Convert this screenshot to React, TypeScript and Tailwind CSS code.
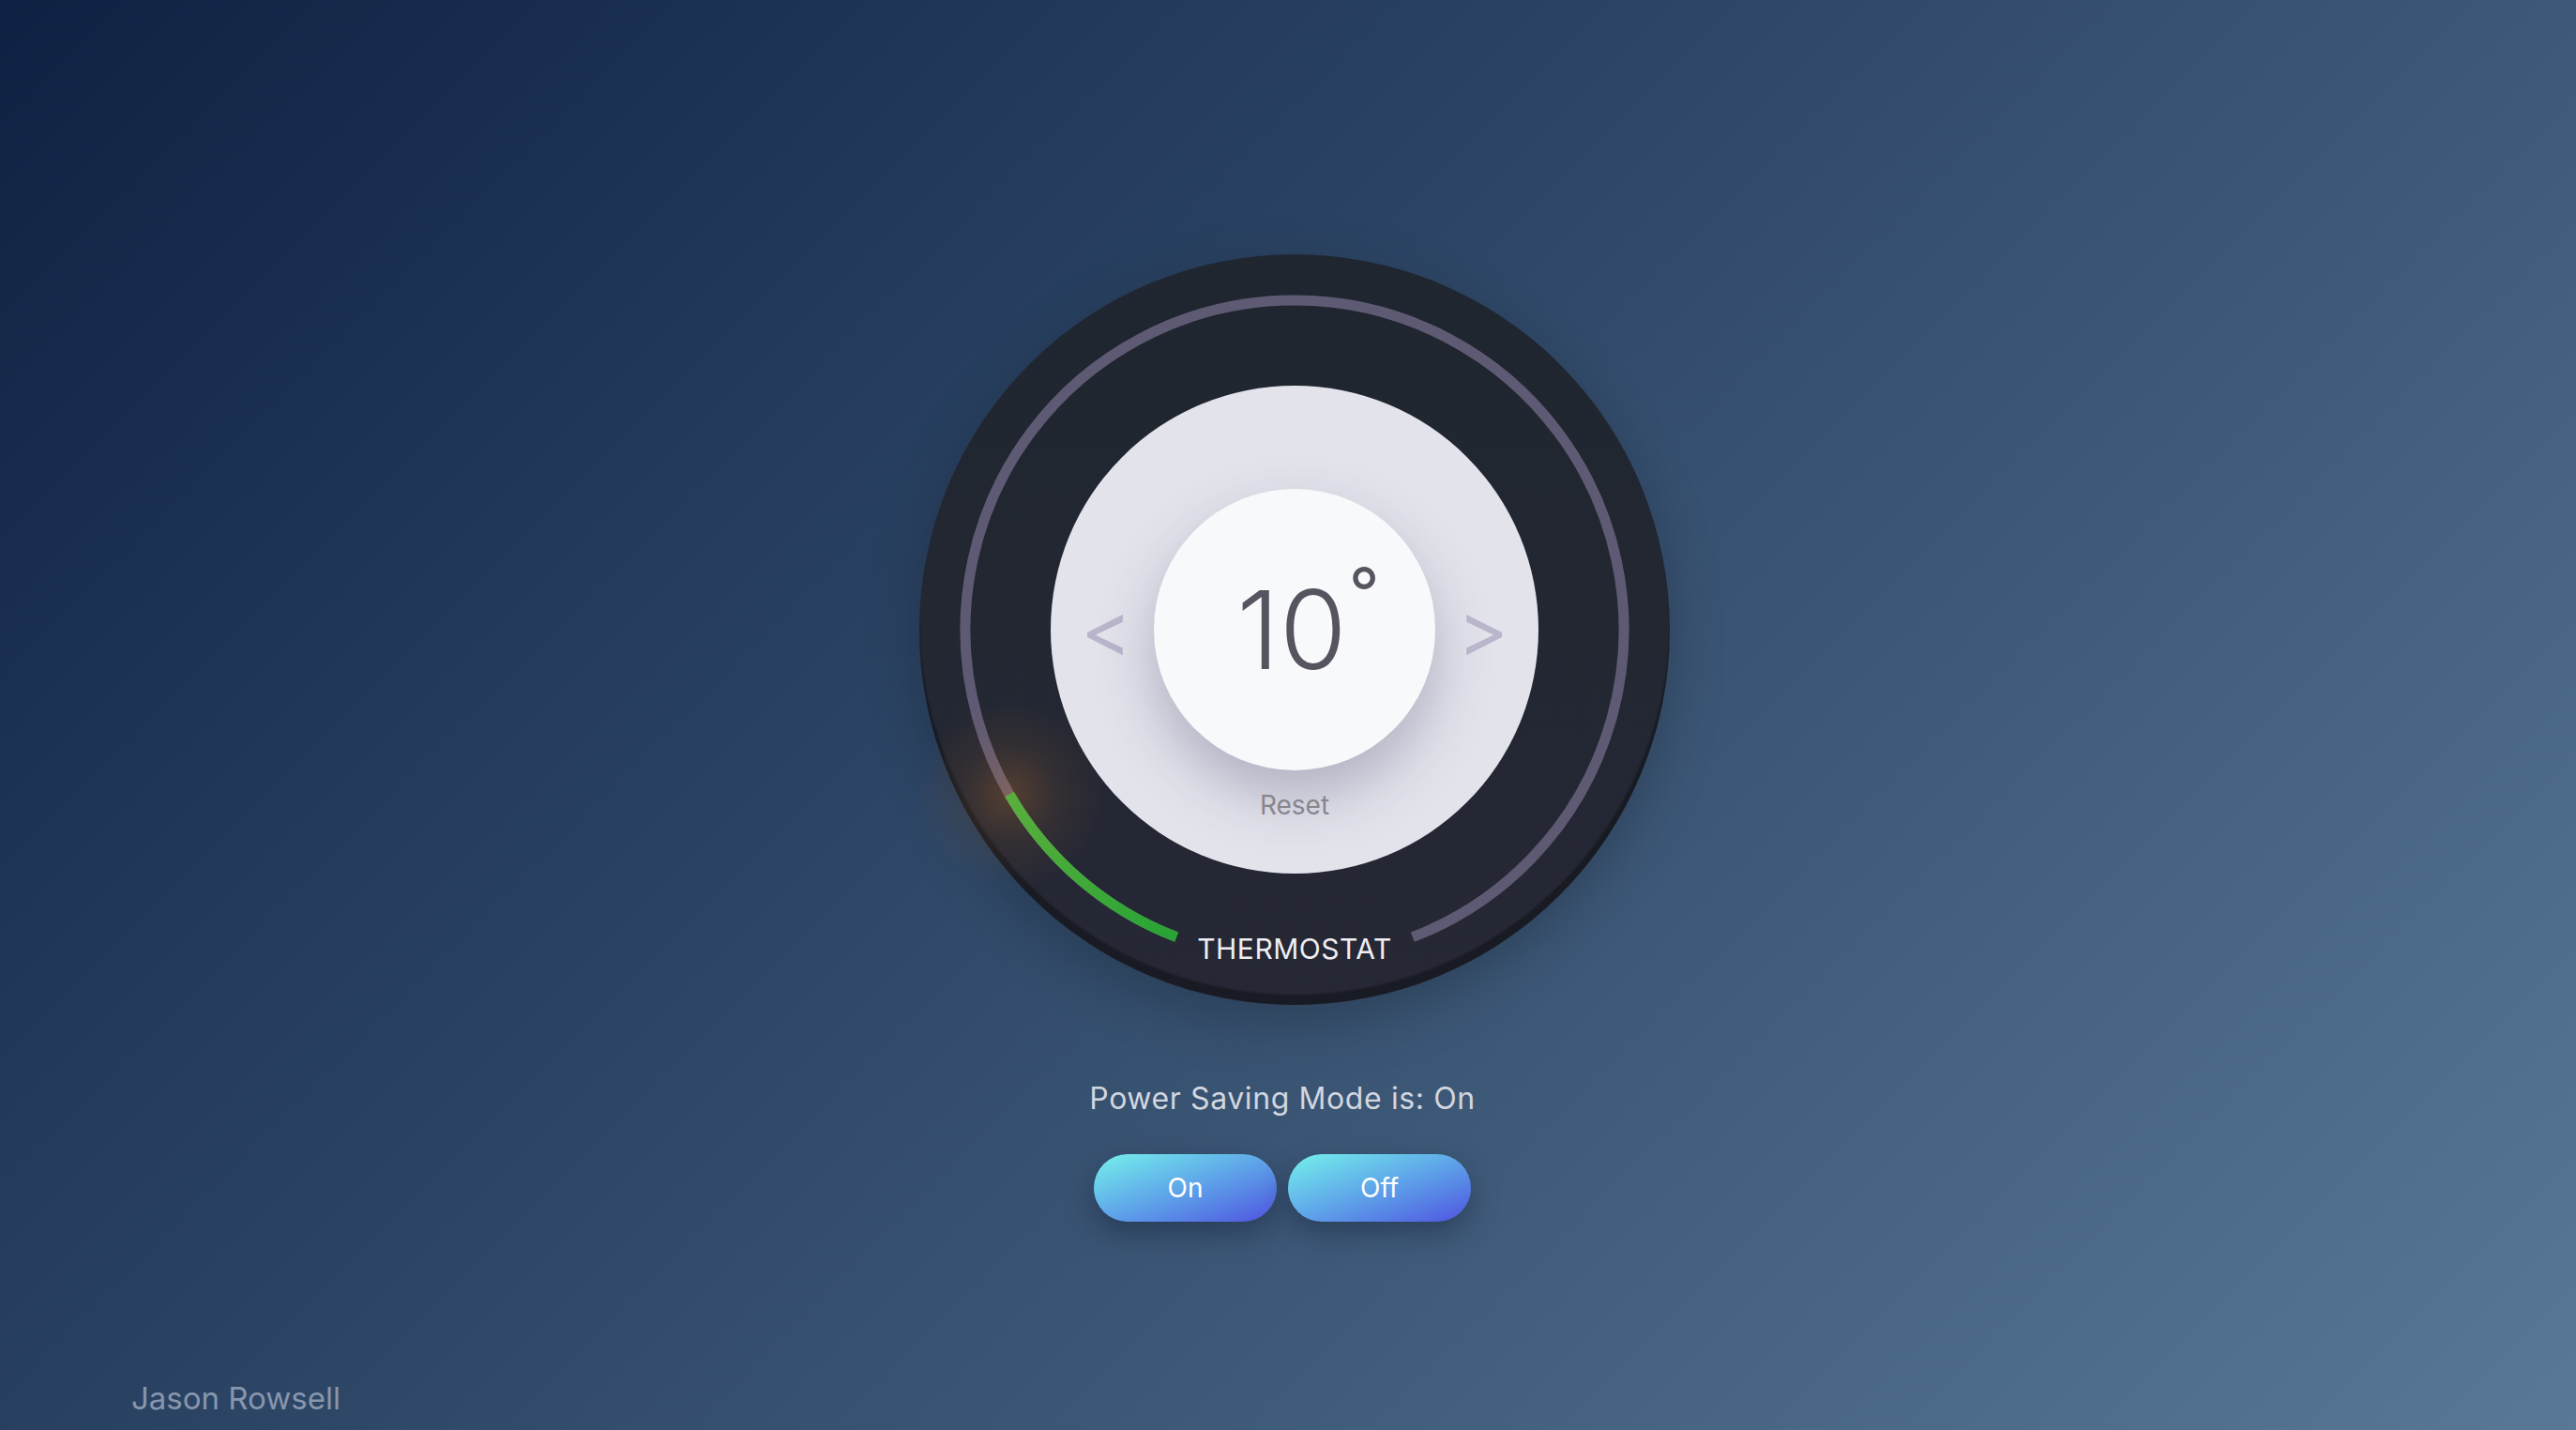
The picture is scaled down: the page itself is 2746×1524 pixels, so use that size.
import React, { useState } from 'react';

const FONT = { fontFamily: 'Inter, "DejaVu Sans", sans-serif' };

// dial geometry (svg units = px)
const R = 351;
const C = 400;
const pt = (deg: number) => {
  const a = (deg * Math.PI) / 180;
  return [C - R * Math.sin(a), C + R * Math.cos(a)];
};
const [gx1, gy1] = pt(21);
const [gx2, gy2] = pt(-21);
const [hx, hy] = pt(60);

const Dial: React.FC<{ temp: number; onChange: (t: number) => void }> = ({ temp, onChange }) => (
  <div className="relative ml-[14px] flex h-[800px] w-[800px] items-center justify-center rounded-full bg-linear-to-b from-[#1f262f] to-[#262835] shadow-[inset_0_-11px_2px_rgba(0,0,0,0.32),0_20px_60px_rgba(0,0,0,0.22)]">
    <svg className="pointer-events-none absolute inset-0 overflow-visible" width={800} height={800} viewBox="0 0 800 800">
      <defs>
        <radialGradient id="glow" cx={hx} cy={hy} r={100} gradientUnits="userSpaceOnUse">
          <stop offset="0" stopColor="#d07a2c" stopOpacity="0.28" />
          <stop offset="0.5" stopColor="#d07a2c" stopOpacity="0.09" />
          <stop offset="1" stopColor="#d07a2c" stopOpacity="0" />
        </radialGradient>
        <linearGradient id="green" x1={hx} y1={hy} x2={gx1} y2={gy1} gradientUnits="userSpaceOnUse">
          <stop offset="0" stopColor="#5bae3d" />
          <stop offset="1" stopColor="#27a434" />
        </linearGradient>
      </defs>
      <path
        d={`M ${gx1} ${gy1} A ${R} ${R} 0 1 1 ${gx2} ${gy2}`}
        stroke="#5f5a74"
        strokeWidth={11}
        fill="none"
      />
      <circle cx={hx} cy={hy} r={100} fill="url(#glow)" />
      <path
        d={`M ${hx} ${hy} A ${R} ${R} 0 0 0 ${gx1} ${gy1}`}
        stroke="url(#green)"
        strokeWidth={11}
        fill="none"
      />
    </svg>

    <div className="relative flex h-[520px] w-[520px] flex-col items-center rounded-full bg-[#e3e3ec] pt-[110px]">
      <div className="flex w-full items-center justify-between px-[32px]">
        <button
          onClick={() => onChange(temp - 1)}
          className="text-[82px] font-normal leading-none text-[#b9b6cc]"
        >
          &lt;
        </button>
        <div className="flex h-[300px] w-[300px] items-center justify-center rounded-full bg-[#f8f9fb] shadow-[0_28px_60px_rgba(70,70,105,0.32)]">
          <span className="relative mr-[6px] text-[116px] font-light leading-none text-[#55545f]">
            {temp}
            <span className="absolute left-[calc(100%+2px)] top-[-18px] text-[72px] font-normal leading-none">°</span>
          </span>
        </div>
        <button
          onClick={() => onChange(temp + 1)}
          className="text-[82px] font-normal leading-none text-[#b9b6cc]"
        >
          &gt;
        </button>
      </div>
      <button onClick={() => onChange(10)} className="mt-[23px] text-[28px] leading-none text-[#87868d]">
        Reset
      </button>
    </div>

    <div className="absolute bottom-[45px] left-0 right-0 text-center text-[30px] leading-none tracking-[0.5px] text-[#eeeef2]">
      THERMOSTAT
    </div>
  </div>
);

export default function App() {
  const [temp, setTemp] = useState(10);
  const [saving, setSaving] = useState(true);

  return (
    <div
      style={FONT}
      className="flex min-h-screen flex-col bg-[linear-gradient(135deg,#0e2142_0%,#587896_100%)]"
    >
      <main className="flex flex-1 flex-col items-center pt-[271px]">
        <Dial temp={temp} onChange={setTemp} />

        <p className="mr-[12px] mt-[84px] text-[32px] leading-none tracking-[0.6px] text-[#d2d6df]">
          Power Saving Mode is: {saving ? 'On' : 'Off'}
        </p>

        <div className="mr-[12px] mt-[43px] flex gap-[12px]">
          {['On', 'Off'].map((l) => (
            <button
              key={l}
              onClick={() => setSaving(l === 'On')}
              className="h-[72px] w-[195px] rounded-full bg-linear-to-br from-[#76f1ea] to-[#5050df] text-[28px] text-white shadow-[0_12px_30px_rgba(10,20,40,0.35)]"
            >
              {l}
            </button>
          ))}
        </div>
      </main>

      <footer className="pb-[17px] pl-[140px] text-[33px] leading-none text-[#8796ad]">Jason Rowsell</footer>
    </div>
  );
}
